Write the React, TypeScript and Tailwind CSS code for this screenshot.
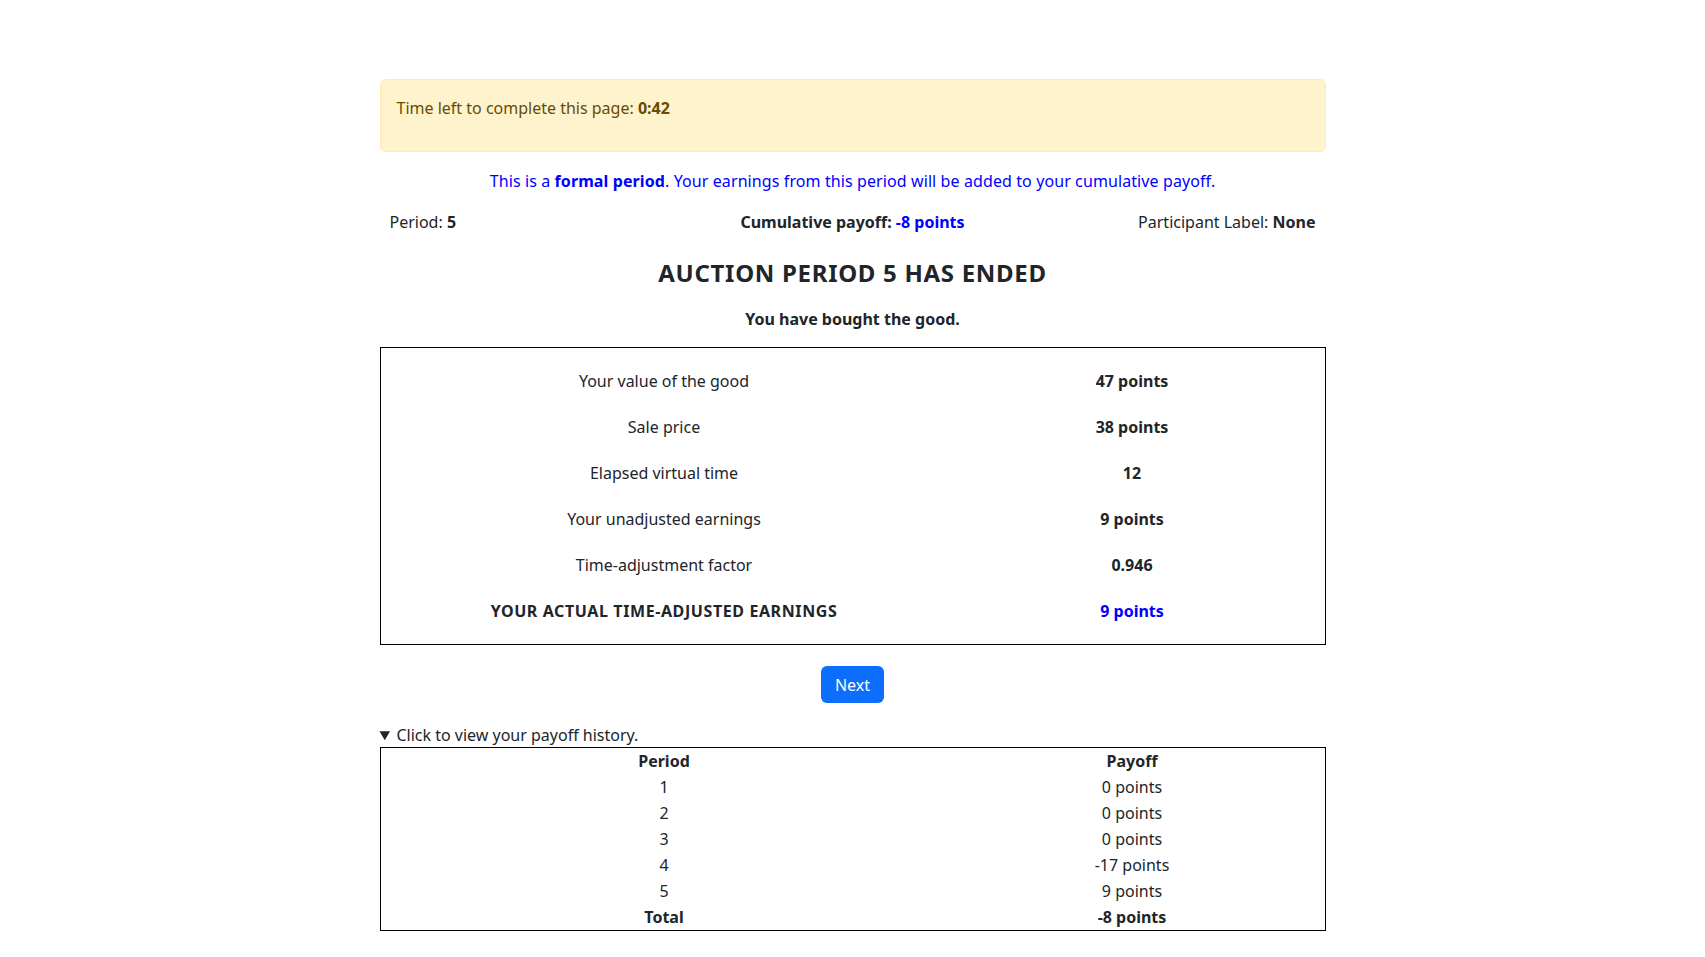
import React from 'react';

const results = [
  { label: 'Your value of the good', value: '47 points' },
  { label: 'Sale price', value: '38 points' },
  { label: 'Elapsed virtual time', value: '12' },
  { label: 'Your unadjusted earnings', value: '9 points' },
  { label: 'Time-adjustment factor', value: '0.946' },
];

const history = [
  { period: '1', payoff: '0 points' },
  { period: '2', payoff: '0 points' },
  { period: '3', payoff: '0 points' },
  { period: '4', payoff: '-17 points' },
  { period: '5', payoff: '9 points' },
];

export default function App() {
  return (
    <div className="min-h-screen bg-white text-[16px] leading-6 text-[#212529] font-['Noto_Sans',sans-serif]">
      <div className="w-[946px] mx-auto pt-[79px] pb-10">
        {/* Timer */}
        <div className="border border-[#ffecb5] bg-[#fff3cd] text-[#664d03] rounded-md px-4 pt-4 pb-[15px]">
          <p className="mb-4">
            Time left to complete this page: <span className="font-bold">0:42</span>
          </p>
        </div>

        <p className="mt-[17px] text-center text-[#0000ff] tracking-[0.1px]">
          This is a <span className="font-bold">formal period</span>. Your earnings from this period will be added to your cumulative payoff.
        </p>

        {/* Status row */}
        <div className="mt-[17px] grid grid-cols-3 px-[10px]">
          <div className="text-left">
            Period: <span className="font-bold">5</span>
          </div>
          <div className="text-center font-bold">
            Cumulative payoff: <span className="text-[#0000ff]">-8 points</span>
          </div>
          <div className="text-right">
            Participant Label: <span className="font-bold">None</span>
          </div>
        </div>

        <h4 className="mt-[24px] text-center text-[24px] leading-[29px] font-bold tracking-[0.7px]">AUCTION PERIOD 5 HAS ENDED</h4>

        <p className="mt-5 text-center font-bold">You have bought the good.</p>

        {/* Results */}
        <div className="mt-4 border border-black py-[10px] px-[4px]">
          {results.map((r) => (
            <div key={r.label} className="grid grid-cols-[559px_1fr] h-[46px] items-center text-center">
              <div>{r.label}</div>
              <div className="font-bold">{r.value}</div>
            </div>
          ))}
          <div className="grid grid-cols-[559px_1fr] h-[46px] items-center text-center font-bold">
            <div className="tracking-[0.6px]">YOUR ACTUAL TIME-ADJUSTED EARNINGS</div>
            <div className="text-[#0000ff]">9 points</div>
          </div>
        </div>

        <div className="mt-[21px] flex justify-center">
          <button className="h-[37px] px-[14px] rounded-md bg-[#0d6efd] text-white">Next</button>
        </div>

        <details open className="mt-5">
          <summary className="cursor-pointer">Click to view your payoff history.</summary>
          <div className="border border-black px-[4px]">
            <div className="grid grid-cols-[559px_1fr] h-[26px] items-center text-center font-bold">
              <div>Period</div>
              <div>Payoff</div>
            </div>
            {history.map((h) => (
              <div key={h.period} className="grid grid-cols-[559px_1fr] h-[26px] items-center text-center">
                <div>{h.period}</div>
                <div>{h.payoff}</div>
              </div>
            ))}
            <div className="grid grid-cols-[559px_1fr] h-[26px] items-center text-center font-bold">
              <div>Total</div>
              <div>-8 points</div>
            </div>
          </div>
        </details>
      </div>
    </div>
  );
}
